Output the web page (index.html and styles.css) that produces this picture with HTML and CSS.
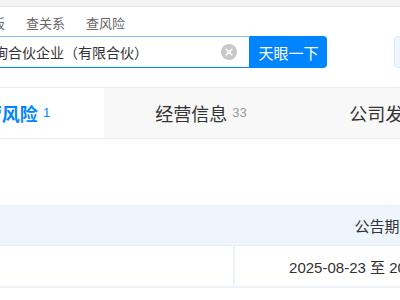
FILE: index.html
```html
<!DOCTYPE html>
<html lang="zh-CN">

<head>
    <meta charset="UTF-8">
    <meta name="viewport" content="width=device-width, initial-scale=1.0">
    <title>企业详情</title>
    <link rel="stylesheet" href="styles.css">
</head>

<body>
    <div class="topbar"></div>

    <header class="header">
        <div class="search">
            <nav class="search-tabs">
                <span>查公司</span>
                <span>查老板</span>
                <span>查关系</span>
                <span>查风险</span>
            </nav>
            <div class="search-row">
                <div class="search-input">
                    <span class="query">上海恒信投资咨询合伙企业（有限合伙）</span>
                    <span class="clear">
                        <svg width="16" height="16" viewBox="0 0 16 16">
                            <circle cx="8" cy="8" r="8" fill="#c8c8c8" />
                            <path d="M5.2 5.2 L10.8 10.8 M10.8 5.2 L5.2 10.8" stroke="#fff" stroke-width="1.6" stroke-linecap="round" />
                        </svg>
                    </span>
                </div>
                <button class="search-btn">天眼一下</button>
                <div class="side-box"></div>
            </div>
        </div>
    </header>

    <div class="tabs">
        <div class="tab active">经营风险<span class="count">1</span></div>
        <div class="tab">经营信息<span class="count">33</span></div>
        <div class="tab">公司发展<span class="count">12</span></div>
    </div>

    <div class="content">
        <table class="data-table">
            <thead>
                <tr>
                    <th class="col-first"></th>
                    <th class="col-date">公告期</th>
                </tr>
            </thead>
            <tbody>
                <tr>
                    <td class="col-first"></td>
                    <td class="col-date">2025-08-23 至 2025-09-23</td>
                </tr>
            </tbody>
        </table>
    </div>
</body>

</html>
```

FILE: styles.css
```css
html,
body {
    overflow: hidden;
}

body {
    margin: 0;
    font-family: "Liberation Sans", "Noto Sans CJK SC", sans-serif;
    color: #333;
    background-color: #fff;
}

.topbar {
    height: 6px;
    background-color: #f3f3f3;
    border-bottom: 1px solid #e4e4e4;
}

.header {
    height: 80px;
    background: white;
    border-bottom: 1px solid #ececec;
    box-shadow: 0 1px 2px rgba(0, 0, 0, 0.04);
}

.search {
    width: 700px;
    margin-left: -110px;
    padding-top: 9px;
}

.search-tabs {
    display: flex;
    gap: 21px;
    padding-left: 16px;
    font-size: 13px;
    line-height: 16px;
    color: #666;
}

.search-row {
    display: flex;
    margin-top: 4px;
    height: 32px;
}

.search-row > * {
    flex-shrink: 0;
}

.search-input {
    display: flex;
    align-items: center;
    box-sizing: border-box;
    width: 360px;
    height: 32px;
    padding-left: 5px;
    border: 1px solid #0084ff;
    border-top-color: #7fbfff;
    border-radius: 4px 0 0 4px;
    font-size: 14px;
    white-space: nowrap;
    overflow: hidden;
}

.query {
    flex: 1;
    color: #333;
}

.clear {
    display: flex;
    margin-right: 12px;
}

.search-btn {
    width: 77px;
    height: 32px;
    border: none;
    border-radius: 0 4px 4px 0;
    background-color: #0084ff;
    color: white;
    font-family: "Noto Sans CJK SC", sans-serif;
    font-size: 15px;
    padding: 0;
}

.side-box {
    margin-left: 67px;
    width: 60px;
    height: 32px;
    box-sizing: border-box;
    border: 1px solid #d9e9fb;
    border-radius: 4px;
    background-color: #eef6ff;
}

.tabs {
    display: flex;
    margin-left: -88px;
    height: 50px;
    background-color: #f8f8f8;
    border-bottom: 1px solid #ededed;
}

.tab {
    flex: 0 0 194px;
    display: flex;
    justify-content: center;
    align-items: center;
    font-family: "Noto Sans CJK SC", sans-serif;
    font-size: 18px;
    color: #333;
}

.tab.active {
    flex-basis: 192px;
    background: white;
    color: #0084ff;
    font-weight: bold;
}

.count {
    margin-left: 5px;
    margin-bottom: 2px;
    font-family: "Liberation Sans", sans-serif;
    font-size: 13px;
    font-weight: normal;
    color: #999;
}

.tab.active .count {
    color: #0084ff;
}

.content {
    padding-top: 66px;
}

.data-table {
    margin-left: -100px;
    border-collapse: collapse;
    table-layout: fixed;
    width: 620px;
    font-size: 15px;
}

.data-table th,
.data-table td {
    padding: 0;
    font-weight: normal;
    text-align: center;
    color: #333;
}

.data-table th {
    height: 39px;
    background-color: #eef5fc;
    border-top: 1px solid #e6eef7;
    border-bottom: 1px solid #e6eef7;
}

.data-table td {
    height: 40px;
    border-bottom: 2px solid #eef3f9;
}

.data-table td.col-date {
    border-left: 2px solid #eef3f9;
}

.col-first {
    width: 334px;
}

.col-date {
    width: 286px;
}
```
